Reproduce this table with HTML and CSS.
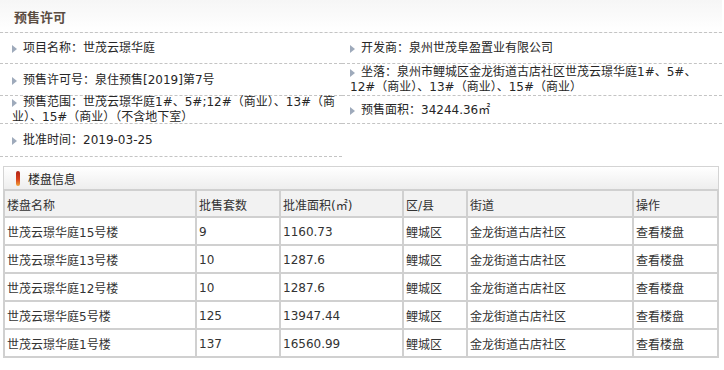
FILE: index.html
```html
<!DOCTYPE html>
<html lang="zh">
<head>
<meta charset="utf-8">
<title>预售许可</title>
<link rel="stylesheet" href="styles.css">
</head>
<body>
<div class="page">
  <div class="sec-head"><h2 class="sec-title">预售许可</h2></div>
  <div class="info">
    <div class="cell"><p class="txt"><i class="tri"></i>项目名称：世茂云璟华庭</p></div>
    <div class="cell right"><p class="txt"><i class="tri"></i>开发商：泉州世茂阜盈置业有限公司</p></div>
    <div class="cell"><p class="txt"><i class="tri"></i>预售许可号：泉住预售[2019]第7号</p></div>
    <div class="cell right"><p class="txt"><i class="tri"></i>坐落：泉州市鲤城区金龙街道古店社区世茂云璟华庭1#、5#、<br>12#（商业）、13#（商业）、15#（商业）</p></div>
    <div class="cell"><p class="txt"><i class="tri"></i>预售范围：世茂云璟华庭1#、5#;12#（商业）、13#（商<br>业）、15#（商业）（不含地下室）</p></div>
    <div class="cell right"><p class="txt"><i class="tri"></i>预售面积：34244.36㎡</p></div>
    <div class="cell"><p class="txt"><i class="tri"></i>批准时间：2019-03-25</p></div>
    <div class="cell right empty"></div>
  </div>
  <div class="box-head"><span class="bar"></span>楼盘信息</div>
  <table class="list">
    <colgroup>
      <col class="c1"><col class="c2"><col class="c3"><col class="c4"><col class="c5"><col class="c6">
    </colgroup>
    <thead>
      <tr><th>楼盘名称</th><th>批售套数</th><th>批准面积(㎡)</th><th>区/县</th><th>街道</th><th>操作</th></tr>
    </thead>
    <tbody>
      <tr><td>世茂云璟华庭15号楼</td><td>9</td><td>1160.73</td><td>鲤城区</td><td>金龙街道古店社区</td><td>查看楼盘</td></tr>
      <tr><td>世茂云璟华庭13号楼</td><td>10</td><td>1287.6</td><td>鲤城区</td><td>金龙街道古店社区</td><td>查看楼盘</td></tr>
      <tr><td>世茂云璟华庭12号楼</td><td>10</td><td>1287.6</td><td>鲤城区</td><td>金龙街道古店社区</td><td>查看楼盘</td></tr>
      <tr><td>世茂云璟华庭5号楼</td><td>125</td><td>13947.44</td><td>鲤城区</td><td>金龙街道古店社区</td><td>查看楼盘</td></tr>
      <tr><td>世茂云璟华庭1号楼</td><td>137</td><td>16560.99</td><td>鲤城区</td><td>金龙街道古店社区</td><td>查看楼盘</td></tr>
    </tbody>
  </table>
</div>
</body>
</html>
```

FILE: styles.css
```css
html, body {
  margin: 0;
  padding: 0;
  background: #fff;
}
body {
  font-family: "DejaVu Sans", "Noto Sans CJK SC", sans-serif;
  font-size: 12px;
  color: #262626;
}
.page {
  width: 722px;
}
.sec-head {
  height: 32px;
  border-bottom: 1px dashed #c4c4c4;
  background: linear-gradient(#f6f6f6, #ffffff);
  display: flex;
  align-items: center;
  padding-left: 14px;
}
.sec-title {
  margin: 0;
  font-size: 13px;
  font-weight: bold;
  color: #5b4d42;
  font-family: "Noto Sans CJK SC", sans-serif;
}
.info {
  display: grid;
  grid-template-columns: 342px 1fr;
  grid-template-rows: 31px 32px 28px 33px;
}
.cell {
  display: flex;
  align-items: center;
  padding: 1px 0 0 12px;
  border-bottom: 1px dashed #c4c4c4;
  white-space: nowrap;
}
.cell.right {
  padding-left: 8px;
}
.cell.empty {
  border-bottom: none;
}
.txt {
  margin: 0;
  line-height: 15px;
}
.tri {
  display: inline-block;
  width: 0;
  height: 0;
  border-left: 5px solid #9eaabb;
  border-top: 4px solid transparent;
  border-bottom: 4px solid transparent;
  margin-right: 6px;
  vertical-align: -1px;
}
.box-head {
  box-sizing: border-box;
  margin: 9px 0 0 3px;
  width: 716px;
  height: 23px;
  border: 1px solid #d4d4d4;
  border-bottom: none;
  background: linear-gradient(#ffffff, #eeeeee);
  display: flex;
  align-items: center;
  padding-left: 12px;
}
.bar {
  display: inline-block;
  width: 4px;
  height: 15px;
  border-radius: 2px;
  background: linear-gradient(#b02418, #d8401c 55%, #f0a43a);
  margin-right: 8px;
}
.list {
  margin-left: 3px;
  width: 716px;
  table-layout: fixed;
  border-collapse: collapse;
  border: 2px solid #d0d0d0;
  color: #333;
}
.c1 { width: 192px; }
.c2 { width: 84px; }
.c3 { width: 123px; }
.c4 { width: 64px; }
.c5 { width: 166px; }
.c6 { width: 85px; }
.list th, .list td {
  border: 2px solid #d0d0d0;
  padding: 1px 0 0 2px;
  text-align: left;
  font-weight: normal;
  white-space: nowrap;
  overflow: hidden;
}
.list th {
  height: 24px;
  background: #f2f2f2;
}
.list td {
  height: 25px;
  background: #fff;
}
```
